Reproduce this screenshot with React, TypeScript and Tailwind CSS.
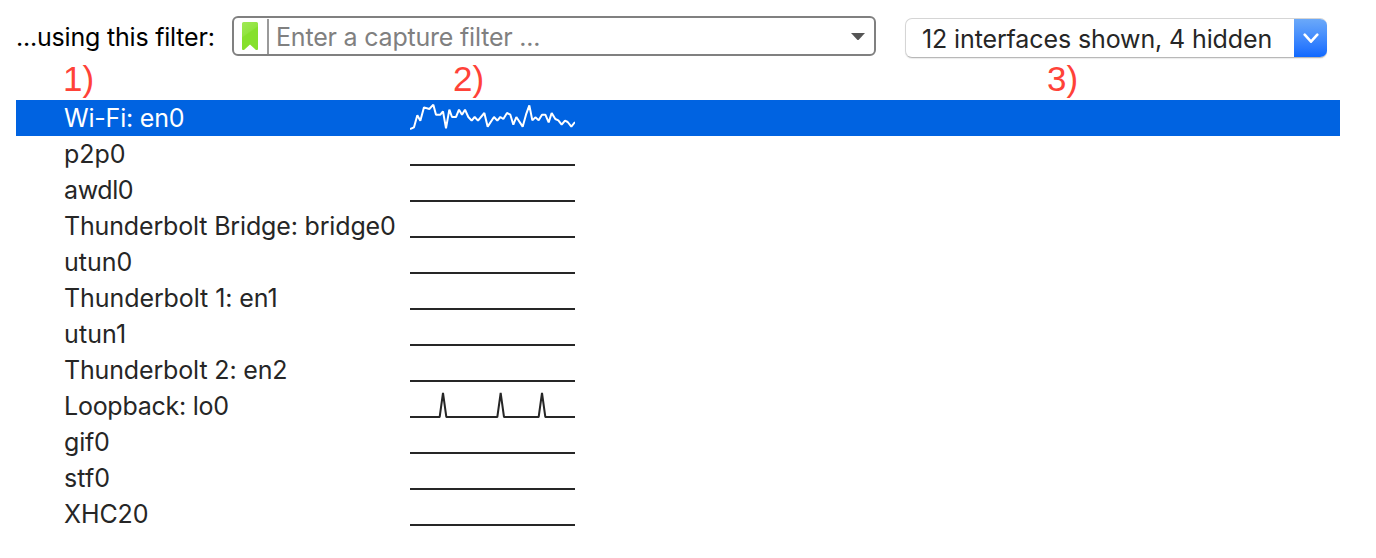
const FLAT = '30,93 525,93';
const WIFI =
  '30,93 42,88 52,52 61,68 72,28 88,33 100,20 108,50 121,50 129,40 138,91 148,35 156,57 168,57 177,35 186,50 195,35 205,57 215,68 224,57 234,68 253,45 263,86 282,57 292,68 301,57 310,63 321,45 331,50 340,80 349,57 368,86 378,50 388,22 397,67 406,58 416,67 426,50 436,50 446,73 455,45 466,63 475,67 485,80 495,68 503,72 514,86 525,72';
const LOOPBACK =
  '30,93 119,93 129,21 139,93 292,93 302,21 312,93 416,93 426,21 436,93 525,93';

type Interface = { name: string; points: string; tracking: string };

const interfaces: Interface[] = [
  { name: 'Wi-Fi: en0', points: WIFI, tracking: 'tracking-[-0.2px]' },
  { name: 'p2p0', points: FLAT, tracking: 'tracking-[0px]' },
  { name: 'awdl0', points: FLAT, tracking: 'tracking-[-0.4px]' },
  { name: 'Thunderbolt Bridge: bridge0', points: FLAT, tracking: 'tracking-[-0.16px]' },
  { name: 'utun0', points: FLAT, tracking: 'tracking-[0px]' },
  { name: 'Thunderbolt 1: en1', points: FLAT, tracking: 'tracking-[-0.08px]' },
  { name: 'utun1', points: FLAT, tracking: 'tracking-[0.1px]' },
  { name: 'Thunderbolt 2: en2', points: FLAT, tracking: 'tracking-[-0.15px]' },
  { name: 'Loopback: lo0', points: LOOPBACK, tracking: 'tracking-[-0.25px]' },
  { name: 'gif0', points: FLAT, tracking: 'tracking-[-0.2px]' },
  { name: 'stf0', points: FLAT, tracking: 'tracking-[0.1px]' },
  { name: 'XHC20', points: FLAT, tracking: 'tracking-[-0.1px]' },
];

function Sparkline({ points }: { points: string }) {
  return (
    <svg className="h-9 w-[165px] shrink-0" viewBox="30 6 495 108" fill="none">
      <polyline points={points} stroke="currentColor" strokeWidth="6" strokeLinejoin="bevel" />
    </svg>
  );
}

function CaptureFilter() {
  return (
    <div className="ml-[17px] flex h-10 w-[644px] shrink-0 items-center rounded-[6px] border-2 border-[#808080] bg-white">
      <svg className="ml-2 h-7 w-4 shrink-0" viewBox="0 0 16 28">
        <defs>
          <linearGradient id="bookmark" x1="0" y1="0" x2="0.4" y2="1">
            <stop offset="0" stopColor="#a0e955" />
            <stop offset="0.45" stopColor="#92e440" />
            <stop offset="0.5" stopColor="#86e02c" />
            <stop offset="1" stopColor="#86e02c" />
          </linearGradient>
        </defs>
        <path d="M1.5 0h13Q16 0 16 1.5V27q0 1-1 1h-1L8 22.5 2 28H1q-1 0-1-1V1.5Q0 0 1.5 0Z" fill="url(#bookmark)" />
      </svg>
      <div className="ml-[9px] h-[35px] w-0.5 shrink-0 bg-[#9a9a9a]" />
      <span className="ml-[7px] flex-1 pt-px text-[25px] leading-8 tracking-[-0.2px] text-[#808080]">
        Enter a capture filter ...
      </span>
      <svg className="mr-[9px] h-[7px] w-[14px]" viewBox="0 0 14 7">
        <path d="M0 0h14L7.5 7h-1Z" fill="#555" />
      </svg>
    </div>
  );
}

function InterfaceSelect() {
  return (
    <div className="mt-[2px] ml-[29px] flex h-10 w-[422px] shrink-0 overflow-hidden rounded-[7px] border border-[#d5d5d5] border-r-0 border-b-[#b8b8b8] bg-white shadow-[0_1px_1px_rgba(0,0,0,0.08)]">
      <span className="flex flex-1 items-center pt-px pl-4 text-[25px] leading-8 tracking-[-0.12px] text-[#262626]">
        12 interfaces shown, 4 hidden
      </span>
      <div className="-my-px flex h-10 w-[33px] items-center justify-center bg-linear-to-b from-[#6daaf9] to-[#0a66ff]">
        <svg className="h-[11px] w-4" viewBox="0 0 16 11" fill="none">
          <path d="M1.7 1.7 8 8.7l6.3-7" stroke="#fff" strokeWidth="2.6" strokeLinecap="round" strokeLinejoin="round" />
        </svg>
      </div>
    </div>
  );
}

export default function App() {
  return (
    <main className="h-[558px] w-[1376px] overflow-hidden bg-white font-['Inter',sans-serif] whitespace-nowrap">
      <header className="flex h-[60px] items-start pt-4 pl-4">
        <span className="flex h-[42px] w-[199px] shrink-0 items-center text-[25px] leading-8 tracking-[-0.2px] text-black">
          ...using this filter:
        </span>
        <CaptureFilter />
        <InterfaceSelect />
      </header>
      <div className="flex h-10 items-center pb-[2px] font-['Liberation_Sans',sans-serif] text-[35px] leading-9 text-[#ff4238]">
        <span className="ml-[63px] w-[390px]">1)</span>
        <span className="w-[594px]">2)</span>
        <span>3)</span>
      </div>
      <ul className="ml-4 w-[1324px]">
        {interfaces.map((item, index) => (
          <li
            key={item.name}
            className={
              index === 0
                ? 'flex h-9 items-center bg-[#0063e1] pl-12 text-white'
                : 'flex h-9 items-center pl-12 text-[#262626]'
            }
          >
            <span className={`w-[346px] shrink-0 text-[25px] leading-9 ${item.tracking}`}>{item.name}</span>
            <Sparkline points={item.points} />
          </li>
        ))}
      </ul>
    </main>
  );
}
